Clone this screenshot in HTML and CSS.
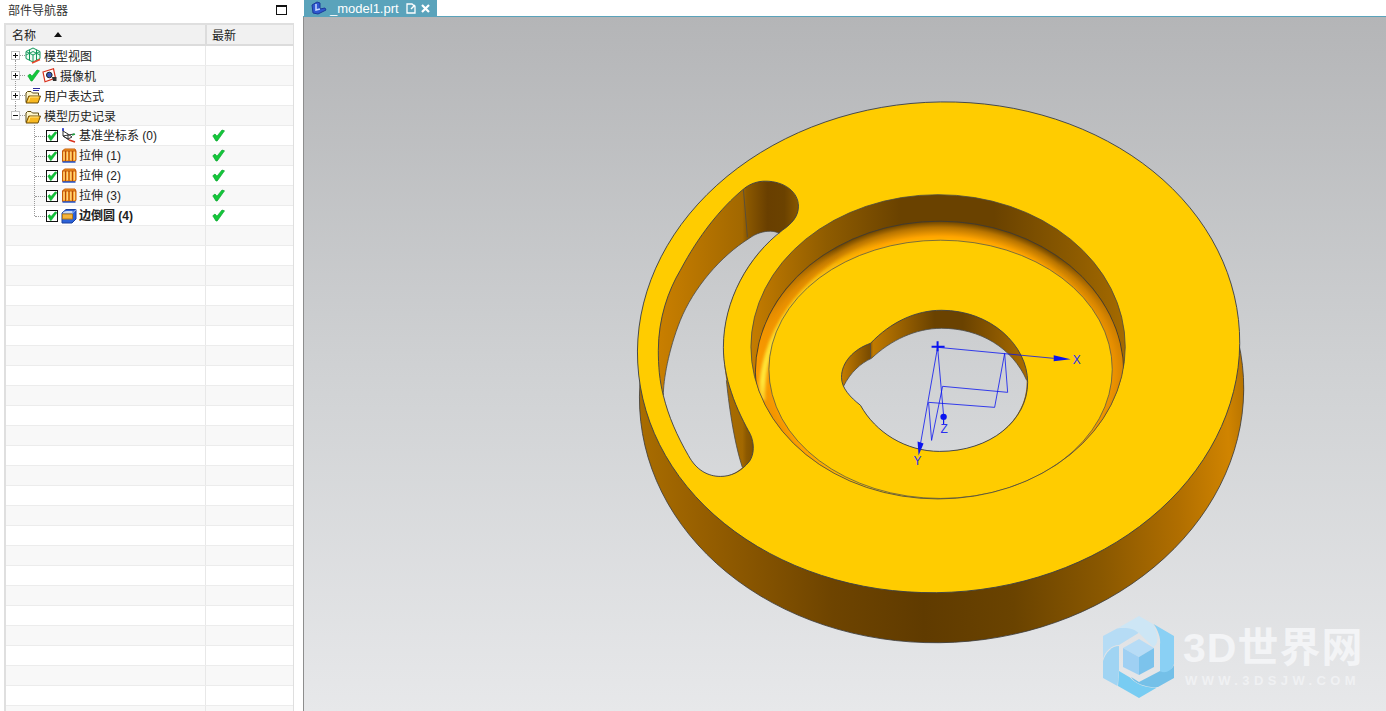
FILE: index.html
```html
<!DOCTYPE html>
<html lang="zh">
<head>
<meta charset="utf-8">
<title>_model1.prt</title>
<link rel="stylesheet" href="styles.css">
</head>
<body>
<svg class="defs" width="0" height="0" aria-hidden="true">
  <defs>
    <symbol id="i-check" viewBox="0 0 13 13">
      <path d="M.8 6.800 L3 5 L5 7.200 L10 1 L12.500 1.800 L5.200 12 L4 12 Z" fill="#12c83a" stroke="#0aa52c" stroke-width=".7"/>
    </symbol>
    <symbol id="i-box" viewBox="0 0 12 12">
      <rect x=".5" y=".5" width="11" height="11" fill="#fff" stroke="#111"/>
      <path d="M1.800 6 L3.600 4.600 L5 6.400 L9.200 1.800 L11 2.500 L5.200 10.500 L4.400 10.500 Z" fill="#10c236" stroke="#0aa52c" stroke-width=".5"/>
    </symbol>
    <symbol id="i-folder" viewBox="0 0 16 16">
      <path d="M1 14 V5 L2.500 3.500 H6 L7.500 5 H13.500 V7.500" fill="#fff6cc" stroke="#5c4a10"/>
      <path d="M1 15 L3.800 8 H15.500 L13 15 Z" fill="#f8b820" stroke="#6b4c08"/>
      <path d="M3.500 13.500 L5 9 H13.500" fill="none" stroke="#ffe890"/>
    </symbol>
    <symbol id="i-extrude" viewBox="0 0 16 15">
      <path d="M1.500 3 L3.500 1 H14 L15 3 V12 L14 13.500 H1.500 Z" fill="#f7a020" stroke="#c85a08"/>
      <path d="M1.500 3 H15 M4.500 3 V13 M8 3 V13 M11.500 3 V13" stroke="#b84a08" fill="none"/>
      <path d="M3 3.500 V12 M6.300 3.500 V12 M9.800 3.500 V12 M13.300 3.500 V12" stroke="#ffe0a0" fill="none"/>
      <path d="M1.500 14 H14.500" stroke="#2456c8" stroke-width="1.500"/>
    </symbol>
    <symbol id="i-blend" viewBox="0 0 16 16">
      <path d="M1 5 L5 1.500 H15 V11 L11 15 H1 Z" fill="#2c62d8" stroke="#1a3f9c"/>
      <path d="M1.500 5.500 Q2 3 6 3 H11.500 V5.500 Z" fill="#c8daf8"/>
      <path d="M1.500 6 H11.500 V11 H1.500 Z" fill="#f4b43c" stroke="#b87a12"/>
      <path d="M11.500 5 L15 1.800" stroke="#a8c4f2"/>
    </symbol>
    <linearGradient id="bg" gradientUnits="userSpaceOnUse" x1="0" y1="16" x2="0" y2="711">
      <stop offset="0" stop-color="#b4b5b7"/>
      <stop offset=".5" stop-color="#cfd1d3"/>
      <stop offset="1" stop-color="#e7e8ea"/>
    </linearGradient>
    <linearGradient id="side" gradientUnits="userSpaceOnUse" x1="640" y1="0" x2="1243" y2="0">
      <stop offset="0" stop-color="#a86c00"/>
      <stop offset=".09" stop-color="#975f00"/>
      <stop offset=".3" stop-color="#6e4400"/>
      <stop offset=".45" stop-color="#603b00"/>
      <stop offset=".6" stop-color="#6a4300"/>
      <stop offset=".75" stop-color="#8a5800"/>
      <stop offset=".88" stop-color="#b06e00"/>
      <stop offset=".97" stop-color="#d08400"/>
      <stop offset="1" stop-color="#b87400"/>
    </linearGradient>
    <linearGradient id="wall" gradientUnits="userSpaceOnUse" x1="751" y1="0" x2="1124" y2="0">
      <stop offset="0" stop-color="#c47c00"/>
      <stop offset=".2" stop-color="#8f5c00"/>
      <stop offset=".4" stop-color="#6a4200"/>
      <stop offset=".65" stop-color="#6a4200"/>
      <stop offset=".85" stop-color="#8a5900"/>
      <stop offset="1" stop-color="#a46a00"/>
    </linearGradient>
    <linearGradient id="holewall" gradientUnits="userSpaceOnUse" x1="841" y1="0" x2="1027" y2="0">
      <stop offset="0" stop-color="#c47c00"/>
      <stop offset=".15" stop-color="#7a4c00"/>
      <stop offset=".17" stop-color="#c07a00"/>
      <stop offset=".5" stop-color="#6a4200"/>
      <stop offset=".65" stop-color="#6a4200"/>
      <stop offset="1" stop-color="#a96c00"/>
    </linearGradient>
    <linearGradient id="slotwall" gradientUnits="userSpaceOnUse" x1="658" y1="0" x2="798" y2="0">
      <stop offset="0" stop-color="#c97f00"/>
      <stop offset=".6" stop-color="#a26800"/>
      <stop offset=".63" stop-color="#8c5900"/>
      <stop offset=".78" stop-color="#693f00"/>
      <stop offset=".9" stop-color="#6b4200"/>
      <stop offset="1" stop-color="#875700"/>
    </linearGradient>
    <radialGradient id="fillet" cx=".5" cy=".5" r=".5">
      <stop offset=".84" stop-color="#ffc800"/>
      <stop offset=".9" stop-color="#ffa400"/>
      <stop offset=".96" stop-color="#b87400"/>
      <stop offset="1" stop-color="#6a4300"/>
    </radialGradient>
    <linearGradient id="filletlight" gradientUnits="userSpaceOnUse" x1="755" y1="0" x2="1123" y2="0">
      <stop offset="0" stop-color="#ff9c00"/>
      <stop offset=".22" stop-color="#ff9c00" stop-opacity="0"/>
      <stop offset=".82" stop-color="#ff9c00" stop-opacity="0"/>
      <stop offset="1" stop-color="#ff9c00" stop-opacity=".75"/>
    </linearGradient>
    <linearGradient id="hl" gradientUnits="userSpaceOnUse" x1="751" y1="430" x2="880" y2="240">
      <stop offset="0" stop-color="#ffd020" stop-opacity="0"/>
      <stop offset=".2" stop-color="#ffe63a"/>
      <stop offset=".6" stop-color="#ffdc20" stop-opacity=".9"/>
      <stop offset="1" stop-color="#ffd000" stop-opacity="0"/>
    </linearGradient>
    <clipPath id="rimclip"><ellipse cx="937.500" cy="346.500" rx="187" ry="152"/></clipPath>
    <filter id="soft"><feGaussianBlur stdDeviation="1.500"/></filter>
  </defs>
</svg>

<div class="app">
  <aside class="nav">
    <header class="nav-title">
      <span>部件导航器</span>
      <i class="maximize"></i>
    </header>
    <div class="table">
      <div class="row head">
        <div class="col-name"><span class="head-name">名称</span><i class="sort"></i></div>
        <div class="col-new">最新</div>
      </div>
      <div class="rows">
        <div class="row">
          <div class="col-name d0 vline-down">
            <i class="exp plus"></i><i class="dots"></i>
            <svg class="ic" viewBox="0 0 16 17" width="16" height="17"><path d="M8 1 L15 4.500 V11.500 L8 15 L1 11.500 V4.500 Z M1 4.500 L8 8 L15 4.500 M8 8 V15 M4.500 2.800 V13.200 M11.500 2.800 V13.200 M1 8 L8 4.500 L15 8" fill="#f2fbf5" stroke="#12985a"/><path d="M7 16 L15 12.500" stroke="#e8462a" stroke-width="1.500"/></svg>
            <span>模型视图</span>
          </div>
          <div class="col-new"></div>
        </div>
        <div class="row">
          <div class="col-name d0 vline-full">
            <i class="exp plus"></i><i class="dots"></i>
            <svg class="chk"><use href="#i-check"/></svg>
            <svg class="ic" viewBox="0 0 15 15" width="15" height="15"><path d="M1 4 L11.500 .8 L13.500 10 L3 13.800 Z" fill="#fff" stroke="#d8301c" stroke-width="1.200"/><circle cx="7.300" cy="7" r="2.800" fill="#3a58c0" stroke="#222"/><path d="M10 9 H14.500 V13 H11 Z" fill="#333"/></svg>
            <span>摄像机</span>
          </div>
          <div class="col-new"></div>
        </div>
        <div class="row">
          <div class="col-name d0 vline-full">
            <i class="exp plus"></i><i class="dots"></i>
            <svg class="ic" viewBox="0 0 16 16" width="16" height="16"><use href="#i-folder"/><path d="M8 .5 H15 M8 2.500 H14" stroke="#2a2a9a"/></svg>
            <span>用户表达式</span>
          </div>
          <div class="col-new"></div>
        </div>
        <div class="row">
          <div class="col-name d0 vline-up">
            <i class="exp minus"></i><i class="dots"></i>
            <svg class="ic" viewBox="0 0 16 16" width="16" height="16"><use href="#i-folder"/></svg>
            <span>模型历史记录</span>
          </div>
          <div class="col-new"></div>
        </div>
        <div class="row">
          <div class="col-name d1 sub-line">
            <i class="dots2"></i>
            <svg class="box"><use href="#i-box"/></svg>
            <svg class="ic" viewBox="0 0 16 16" width="16" height="16"><path d="M2 1 V8 L8 12 M2 8 L13 6 M2 3 L7 6 L7 11 L2 8 M7 6 L11 9 L7 11" fill="none" stroke="#333"/><path d="M2 0 V3" stroke="#2030d0" stroke-width="1.500"/><path d="M8 12 L14 14" stroke="#d8301c" stroke-width="1.500"/><path d="M11 7 L14 6" stroke="#20a040" stroke-width="1.500"/></svg>
            <span class="lat">基准坐标系 (0)</span>
          </div>
          <div class="col-new"><svg class="chk"><use href="#i-check"/></svg></div>
        </div>
        <div class="row">
          <div class="col-name d1 sub-line">
            <i class="dots2"></i>
            <svg class="box"><use href="#i-box"/></svg>
            <svg class="ic" width="16" height="15"><use href="#i-extrude"/></svg>
            <span class="lat">拉伸 (1)</span>
          </div>
          <div class="col-new"><svg class="chk"><use href="#i-check"/></svg></div>
        </div>
        <div class="row">
          <div class="col-name d1 sub-line">
            <i class="dots2"></i>
            <svg class="box"><use href="#i-box"/></svg>
            <svg class="ic" width="16" height="15"><use href="#i-extrude"/></svg>
            <span class="lat">拉伸 (2)</span>
          </div>
          <div class="col-new"><svg class="chk"><use href="#i-check"/></svg></div>
        </div>
        <div class="row">
          <div class="col-name d1 sub-line">
            <i class="dots2"></i>
            <svg class="box"><use href="#i-box"/></svg>
            <svg class="ic" width="16" height="15"><use href="#i-extrude"/></svg>
            <span class="lat">拉伸 (3)</span>
          </div>
          <div class="col-new"><svg class="chk"><use href="#i-check"/></svg></div>
        </div>
        <div class="row">
          <div class="col-name d1 sub-last">
            <i class="dots2"></i>
            <svg class="box"><use href="#i-box"/></svg>
            <svg class="ic" width="16" height="16"><use href="#i-blend"/></svg>
            <span class="lat strong">边倒圆 (4)</span>
          </div>
          <div class="col-new"><svg class="chk"><use href="#i-check"/></svg></div>
        </div>
        <div class="row"><div class="col-name"></div><div class="col-new"></div></div>
        <div class="row"><div class="col-name"></div><div class="col-new"></div></div>
        <div class="row"><div class="col-name"></div><div class="col-new"></div></div>
        <div class="row"><div class="col-name"></div><div class="col-new"></div></div>
        <div class="row"><div class="col-name"></div><div class="col-new"></div></div>
        <div class="row"><div class="col-name"></div><div class="col-new"></div></div>
        <div class="row"><div class="col-name"></div><div class="col-new"></div></div>
        <div class="row"><div class="col-name"></div><div class="col-new"></div></div>
        <div class="row"><div class="col-name"></div><div class="col-new"></div></div>
        <div class="row"><div class="col-name"></div><div class="col-new"></div></div>
        <div class="row"><div class="col-name"></div><div class="col-new"></div></div>
        <div class="row"><div class="col-name"></div><div class="col-new"></div></div>
        <div class="row"><div class="col-name"></div><div class="col-new"></div></div>
        <div class="row"><div class="col-name"></div><div class="col-new"></div></div>
        <div class="row"><div class="col-name"></div><div class="col-new"></div></div>
        <div class="row"><div class="col-name"></div><div class="col-new"></div></div>
        <div class="row"><div class="col-name"></div><div class="col-new"></div></div>
        <div class="row"><div class="col-name"></div><div class="col-new"></div></div>
        <div class="row"><div class="col-name"></div><div class="col-new"></div></div>
        <div class="row"><div class="col-name"></div><div class="col-new"></div></div>
        <div class="row"><div class="col-name"></div><div class="col-new"></div></div>
        <div class="row"><div class="col-name"></div><div class="col-new"></div></div>
        <div class="row"><div class="col-name"></div><div class="col-new"></div></div>
        <div class="row"><div class="col-name"></div><div class="col-new"></div></div>
        <div class="row"><div class="col-name"></div><div class="col-new"></div></div>
      </div>
    </div>
  </aside>

  <main class="work">
    <div class="tabs">
      <div class="tab">
        <svg class="tab-logo" viewBox="0 0 16 14" width="16" height="14"><path d="M1 4 L6 1 L9 2 V8 L14 7 L15 9 L7 13 L2 12 Z" fill="#2f58d0" stroke="#1c3a9a"/><path d="M5 3 V9 L9 8" fill="none" stroke="#c8d8ff" stroke-width="1.500"/></svg>
        <span class="tab-name">_model1.prt</span>
        <svg class="tab-doc" viewBox="0 0 10 11" width="10" height="11"><path d="M1 1 H6 L9 3.500 V10 H1 Z" fill="none" stroke="#fff" stroke-width="1.300"/><path d="M5 6 L9 2" stroke="#fff" stroke-width="1.500"/></svg>
        <svg class="tab-x" viewBox="0 0 9 9" width="9" height="9"><path d="M1 1 L8 8 M8 1 L1 8" stroke="#fff" stroke-width="2.200"/></svg>
      </div>
    </div>
    <div class="viewport">
      <svg class="scene" viewBox="304 17 1082 694" preserveAspectRatio="xMinYMin slice" role="img" aria-label="3D model">
        <rect x="304" y="17" width="1082" height="694" fill="url(#bg)"/>

        <!-- body side -->
        <path d="M641 395 L1243 385 L1243 395 L641 405 Z" fill="url(#side)"/>
        <ellipse cx="941" cy="393" rx="302" ry="249" transform="rotate(-3 941 393)" fill="url(#side)" stroke="#3c3c3c" stroke-width=".8"/>
        <!-- top face -->
        <ellipse cx="938" cy="347" rx="301" ry="245" transform="rotate(-3 938 347)" fill="#ffcc00" stroke="#3c4048" stroke-width=".9"/>

        <!-- recess -->
        <ellipse cx="937.500" cy="346.500" rx="187" ry="152" fill="url(#wall)"/>
        <g clip-path="url(#rimclip)">
          <ellipse cx="939" cy="372" rx="184" ry="151" fill="url(#fillet)" stroke="#3a3a3a" stroke-width=".8"/>
          <ellipse cx="939" cy="372" rx="183.500" ry="150.500" fill="url(#filletlight)"/>
          <path d="M762 400 C758 340 800 272 880 242" fill="none" stroke="url(#hl)" stroke-width="6" filter="url(#soft)"/>
          <ellipse cx="940" cy="369" rx="171.500" ry="129" fill="#ffcc00"/>
          <ellipse cx="940" cy="369" rx="171.500" ry="129" fill="none" stroke="#5a5a48" stroke-width=".8"/>
        </g>
        <ellipse cx="937.500" cy="346.500" rx="187" ry="152" fill="none" stroke="#4a4a44" stroke-width=".8"/>

        <!-- slot -->
        <path d="M743 189 C750 183 758 181 765 181 C784 181 798 192 798 206 C798 216 792 223 782 230 C748 256 723 300 723 347 C723 362 726 378 731 392 C736 408 745 425 750 434 C754 443 754 454 749 461 C740 472 730 476 720 476 C708 476 696 470 688 455 C677 436 668 416 663 395 C659 380 658 365 658 350 C658 318 668 290 680 270 C698 236 720 208 743 189 Z" fill="url(#slotwall)"/>
        <path d="M749 238 C756 233 763 231 770 231 C774 231 776 232 779 233 C748 256 723 300 723 347 C723 362 725 372 726 380 C728 400 733 440 742 467 C735 473 728 476 720 476 C708 476 696 470 688 455 C677 436 668 416 663 395 C663 380 668 350 680 320 C693 288 720 256 749 238 Z" fill="url(#bg)"/>
        <path d="M743 189 C750 183 758 181 765 181 C784 181 798 192 798 206 C798 216 792 223 782 230 C748 256 723 300 723 347 C723 362 726 378 731 392 C736 408 745 425 750 434 C754 443 754 454 749 461 C740 472 730 476 720 476 C708 476 696 470 688 455 C677 436 668 416 663 395 C659 380 658 365 658 350 C658 318 668 290 680 270 C698 236 720 208 743 189 Z" fill="none" stroke="#3c4048" stroke-width=".9"/>
        <path d="M743 189 L747 237 M663 395 C663 380 668 350 680 320 C693 288 720 256 749 238 C756 233 763 231 770 231 C774 231 776 232 779 233 M726 380 C728 400 733 440 742 467" fill="none" stroke="#4a4a48" stroke-width=".8"/>

        <!-- central hole -->
        <path d="M870 343 C890 322 915 310 941 310 C990 310 1027 345 1027 382 C1027 420 990 451 939 451 C905 451 875 432 860 405 C850 397 841 388 841 377 C841 362 853 349 870 343 Z" fill="url(#holewall)"/>
        <path d="M871 358 C890 340 915 328 941 328 C980 328 1012 348 1026 380 C1027 420 990 451 939 451 C905 451 875 432 860 405 C853 400 847 394 843 386 C850 372 860 363 871 358 Z" fill="url(#bg)"/>
        <path d="M870 343 C890 322 915 310 941 310 C990 310 1027 345 1027 382 C1027 420 990 451 939 451 C905 451 875 432 860 405 C850 397 841 388 841 377 C841 362 853 349 870 343 Z" fill="none" stroke="#3c4048" stroke-width=".9"/>
        <path d="M870 343 V358 M871 358 C890 340 915 328 941 328 C980 328 1012 348 1026 380 M843 386 C850 372 860 363 871 358" fill="none" stroke="#4a4a48" stroke-width=".8"/>

        <!-- triad -->
        <g fill="none" stroke="#0a14f0" stroke-width=".8">
          <path d="M937 347 L1053 358"/>
          <path d="M1004 353 L1007 392 L942 386 L931 440 L928 402 L994 407 L1004 353"/>
          <path d="M937 347 L920 443"/>
          <path d="M937 347 L943 415"/>
          <path d="M931 346.500 H944 M937 341 V351" stroke-width="2"/>
        </g>
        <path d="M1053 355 L1070 359 L1053 361 Z M917 441 L923 443 L918 455 Z" fill="#0a14f0"/>
        <circle cx="943" cy="416.500" r="3.200" fill="#0a14f0"/>
        <path d="M943 419 V424" stroke="#0a14f0" stroke-width="1.200"/>
        <text x="1072" y="364" class="axis">X</text>
        <text x="913" y="465" class="axis">Y</text>
        <text x="940" y="433" class="axis">Z</text>
      </svg>

      <div class="mark">
        <svg class="mark-logo" viewBox="0 0 72 82" width="72" height="82">
          <path d="M15 12 L36 0 L50 8 C56 20 56 28 50 31 L36 17 C30 13 22 11 15 12 Z" fill="#cde6f5"/>
          <path d="M50.500 8 L71 20 V48 C66 60 60 58 57 55 V29 C58 22 55 14 50.500 8 Z" fill="#8ad0f4"/>
          <path d="M71 49 V62 L55 71 C45 72 32 68 28 61 L36 66 L57 55 C62 58 68 55 71 49 Z" fill="#74c0e8"/>
          <path d="M54 71.500 L36 82 L15 70 L16 55 L27 61.500 C34 69 44 72 54 71.500 Z" fill="#78ccf2"/>
          <path d="M0 62 V45 C3 36 9 30 16 30 V54 L14.500 70 Z" fill="#a0d4f3"/>
          <path d="M0 20 L14 12.500 C24 11 32 13 35.500 17 L16 29 C8 29 2 36 0 43 Z" fill="#b6dcf5"/>
          <path d="M36 23 L51 32 L36 41 L20 32 Z" fill="#b7dcf6"/>
          <path d="M20 32 L36 41 V59 L20 51 Z" fill="#9fd0f3"/>
          <path d="M51 32 V51 L36 59 V41 Z" fill="#7cc3ec"/>
        </svg>
        <div class="mark-text">
          <div class="mark-big">3D世界网</div>
          <div class="mark-small">WWW.3DSJW.COM</div>
        </div>
      </div>
    </div>
  </main>
</div>
</body>
</html>
```

FILE: styles.css
```css
* { box-sizing: border-box; }
html, body { margin: 0; height: 100%; overflow: hidden; background: #fff; }
body {
  font-family: "Noto Sans CJK SC", "Liberation Sans", sans-serif;
  font-size: 12px;
  color: #222;
}
.defs { position: absolute; }
.app { display: flex; height: 711px; width: 1386px; }

/* navigator */
.nav { width: 303px; flex: none; padding: 0 9px 0 4px; background: #fff; display: flex; flex-direction: column; }
.nav-title { height: 23px; display: flex; align-items: center; justify-content: space-between; padding: 0 7px 4px 4px; color: #333; }
.maximize { width: 11px; height: 10px; border: 1px solid #111; border-top-width: 2px; display: block; }
.table { flex: 1; border-style: solid; border-width: 2px 1px 0 2px; border-color: #dfdfdf; overflow: hidden; }
.rows { display: block; }
.row { display: flex; height: 20px; border-bottom: 1px solid #ececec; }
.rows .row:nth-child(even) { background: #f8f8f8; }
.head { height: 21px; background: #f1f1f1; border-bottom: 2px solid #dcdcdc; }
.col-name { width: 199px; flex: none; display: flex; align-items: center; position: relative; line-height: 19px; }
.col-new { flex: 1; border-left: 1px solid #e8e8e8; display: flex; align-items: center; padding-left: 6px; }
.head .col-name { padding-left: 6px; }
.head .col-new { border-left: 2px solid #dcdcdc; padding-left: 5px; }
.sort { width: 0; height: 0; margin-left: 18px; border-style: solid; border-color: transparent; border-width: 0 4.500px 5px; border-bottom-color: #111; }

.d0 { padding-left: 5px; }
.d1 { padding-left: 40px; }
.d1 .ic { margin-right: 2px; }
.exp { width: 9px; height: 9px; background: #fff; border: 1px solid #c4c4c4; position: relative; flex: none; }
.exp::before { content: ""; position: absolute; left: 1px; top: 3px; width: 5px; height: 1px; background: #111; }
.plus::after { content: ""; position: absolute; left: 3px; top: 1px; width: 1px; height: 5px; background: #111; }
.dots { width: 5px; height: 0; border-top: 1px dotted #999; flex: none; }
.dots2 { position: absolute; left: 29px; top: 10px; width: 10px; border-top: 1px dotted #999; }
.ic { flex: none; margin-right: 3px; }
.chk { width: 13px; height: 13px; flex: none; display: block; }
.box { width: 12px; height: 12px; flex: none; margin-right: 3px; }
.d0 .chk { margin-left: 2px; margin-right: 2px; }
.lat { font-family: "Liberation Sans", "Noto Sans CJK SC", sans-serif; padding-top: 2px; }
.strong { font-weight: 700; }

.vline-down::before, .vline-full::before, .vline-up::before,
.sub-line::before, .sub-last::before { content: ""; position: absolute; border-left: 1px dotted #999; }
.vline-down::before { left: 9px; top: 14px; bottom: -1px; }
.vline-full::before { left: 9px; top: -1px; bottom: -1px; }
.vline-up::before { left: 9px; top: -1px; height: 6px; }
.sub-line::before { left: 28px; top: -1px; bottom: -1px; }
.sub-last::before { left: 28px; top: -1px; height: 11px; }

/* workspace */
.work { flex: 1; min-width: 0; display: flex; flex-direction: column; }
.tabs { height: 17px; flex: none; border-bottom: 1px solid #5aa3bb; padding-left: 1px; }
.tab { width: 133px; height: 16px; background: #5aa3bb; display: flex; align-items: center; padding-left: 7px; color: #fff; font-family: "Liberation Sans", sans-serif; font-size: 13px; }
.tab-name { margin-left: 3px; }
.tab-logo { flex: none; }
.tab-doc { margin-left: 7px; flex: none; }
.tab-x { margin-left: 5px; flex: none; }
.viewport { flex: 1; position: relative; border-left: 1px solid #8d8d8d; overflow: hidden; background: #cfd1d3; }
.scene { display: block; width: 1083px; height: 694px; }
.axis { font: 12px "Liberation Sans", sans-serif; fill: #2a30f0; }

/* watermark */
.mark { position: absolute; left: 799px; top: 599px; display: flex; gap: 8px; align-items: flex-start; }
.mark-logo { display: block; flex: none; }
.mark-text { padding-top: 12px; color: #f3f4f6; font-family: "Liberation Sans", "Noto Sans CJK SC", sans-serif; font-weight: 700; }
.mark-big { font-size: 41px; line-height: 40px; letter-spacing: 1px; white-space: nowrap; }
.mark-small { font-size: 13px; line-height: 12px; margin-top: 7px; margin-left: 2px; letter-spacing: 4.400px; white-space: nowrap; color: #f0f1f3; }
```
